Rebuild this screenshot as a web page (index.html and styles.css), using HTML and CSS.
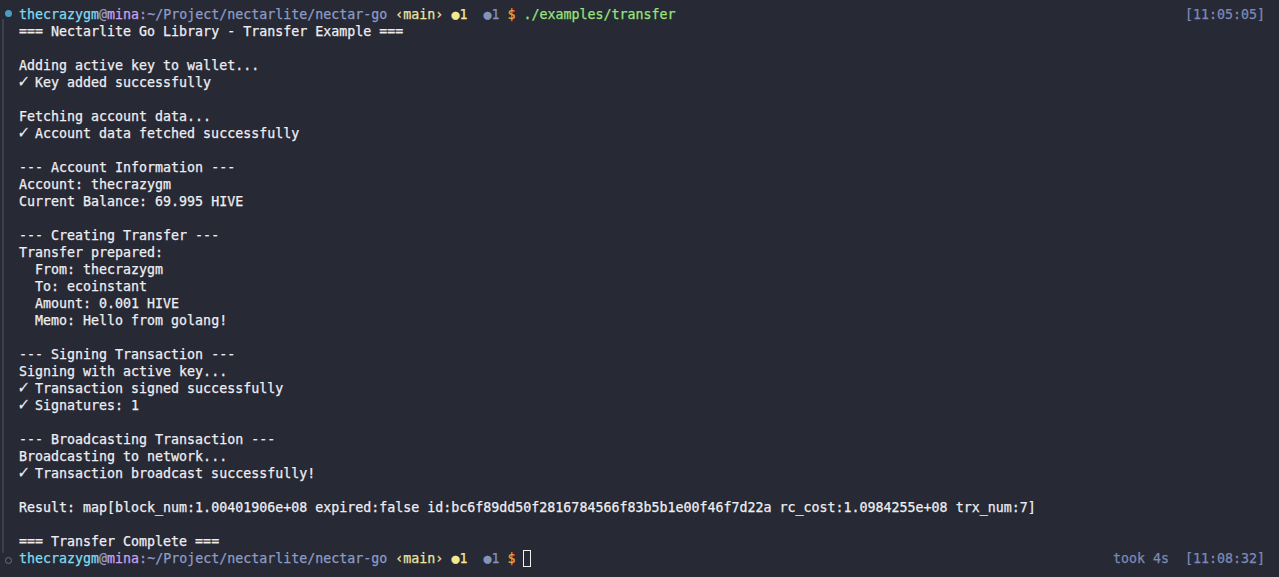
FILE: index.html
```html
<!DOCTYPE html>
<html lang="en">

<head>
    <meta charset="UTF-8" />
    <meta name="viewport" content="width=device-width, initial-scale=1.0" />
    <title>Terminal - nectar-go</title>
    <link rel="stylesheet" href="styles.css">
</head>

<body>
    <div class="terminal">
        <div class="gutter">
            <span class="dot done"></span>
            <span class="rail"></span>
            <span class="dot open"></span>
        </div>
        <div class="screen">
            <div class="prompt">
                <div class="line"><span class="user">thecrazygm</span><span class="at">@</span><span class="host">mina</span><span class="sep">:</span><span class="path">~/Project/nectarlite/nectar-go</span> <span class="branch">‹main›</span> <span class="staged">●1</span>  <span class="dirty">●1</span> <span class="sign">$</span> <span class="cmd">./examples/transfer</span></div>
                <div class="meta">[11:05:05]</div>
            </div>
            <div class="line">=== Nectarlite Go Library - Transfer Example ===</div>
            <div class="line"> </div>
            <div class="line">Adding active key to wallet...</div>
            <div class="line"><span class="tick">✓</span> Key added successfully</div>
            <div class="line"> </div>
            <div class="line">Fetching account data...</div>
            <div class="line"><span class="tick">✓</span> Account data fetched successfully</div>
            <div class="line"> </div>
            <div class="line">--- Account Information ---</div>
            <div class="line">Account: thecrazygm</div>
            <div class="line">Current Balance: 69.995 HIVE</div>
            <div class="line"> </div>
            <div class="line">--- Creating Transfer ---</div>
            <div class="line">Transfer prepared:</div>
            <div class="line">  From: thecrazygm</div>
            <div class="line">  To: ecoinstant</div>
            <div class="line">  Amount: 0.001 HIVE</div>
            <div class="line">  Memo: Hello from golang!</div>
            <div class="line"> </div>
            <div class="line">--- Signing Transaction ---</div>
            <div class="line">Signing with active key...</div>
            <div class="line"><span class="tick">✓</span> Transaction signed successfully</div>
            <div class="line"><span class="tick">✓</span> Signatures: 1</div>
            <div class="line"> </div>
            <div class="line">--- Broadcasting Transaction ---</div>
            <div class="line">Broadcasting to network...</div>
            <div class="line"><span class="tick">✓</span> Transaction broadcast successfully!</div>
            <div class="line"> </div>
            <div class="line">Result: map[block_num:1.00401906e+08 expired:false id:bc6f89dd50f2816784566f83b5b1e00f46f7d22a rc_cost:1.0984255e+08 trx_num:7]</div>
            <div class="line"> </div>
            <div class="line">=== Transfer Complete ===</div>
            <div class="prompt">
                <div class="line"><span class="user">thecrazygm</span><span class="at">@</span><span class="host">mina</span><span class="sep">:</span><span class="path">~/Project/nectarlite/nectar-go</span> <span class="branch">‹main›</span> <span class="staged">●1</span>  <span class="dirty">●1</span> <span class="sign">$</span> <span class="cursor"> </span></div>
                <div class="meta">took 4s  [11:08:32]</div>
            </div>
        </div>
    </div>
</body>

</html>
```

FILE: styles.css
```css
body {
    margin: 0;
    background-color: #272935;
    color: #eeeef2;
    font-family: "DejaVu Sans Mono", "Liberation Mono", monospace;
    font-size: 13.3px;
    -webkit-text-stroke: 0.25px currentColor;
}

.terminal {
    display: flex;
    height: 577px;
    padding-top: 6px;
    box-sizing: border-box;
}

.gutter {
    width: 19px;
    display: flex;
    flex-direction: column;
    align-items: flex-start;
    padding-bottom: 13px;
    box-sizing: border-box;
}

.rail {
    flex: 1;
    width: 2px;
    margin-left: 2px;
    background-color: #3c3f4e;
}

.dot {
    width: 7px;
    height: 7px;
    border-radius: 50%;
    margin-left: 5px;
    box-sizing: border-box;
}

.dot.done {
    margin-top: 4px;
    margin-bottom: 2px;
    background-color: #4a9ec0;
}

.dot.open {
    margin-top: 4px;
    border: 1px solid #6b6f80;
}

.screen {
    flex: 1;
    padding-right: 14px;
}

.line {
    height: 17px;
    line-height: 17px;
    white-space: pre;
}

.tick {
    display: inline-block;
    width: 8px;
    transform: scale(1.15, 1.35) skewX(-8deg);
    transform-origin: 50% 70%;
}

.prompt {
    display: flex;
    justify-content: space-between;
}

.meta {
    height: 17px;
    line-height: 17px;
    white-space: pre;
    color: #7d8ab8;
}

.user {
    color: #82d9f0;
}

.at {
    color: #9a9cba;
}

.host {
    color: #c6a2f2;
}

.sep {
    color: #9a9cba;
}

.path {
    color: #8d9cc6;
}

.branch {
    color: #ece4a2;
}

.staged {
    color: #f2e88e;
}

.dirty {
    color: #8492bc;
}

.sign {
    color: #f4a232;
}

.cmd {
    color: #9be27c;
}

.cursor {
    display: inline-block;
    width: 8px;
    height: 17px;
    vertical-align: top;
    border: 1px solid #f0f0f0;
    box-sizing: border-box;
}
```
